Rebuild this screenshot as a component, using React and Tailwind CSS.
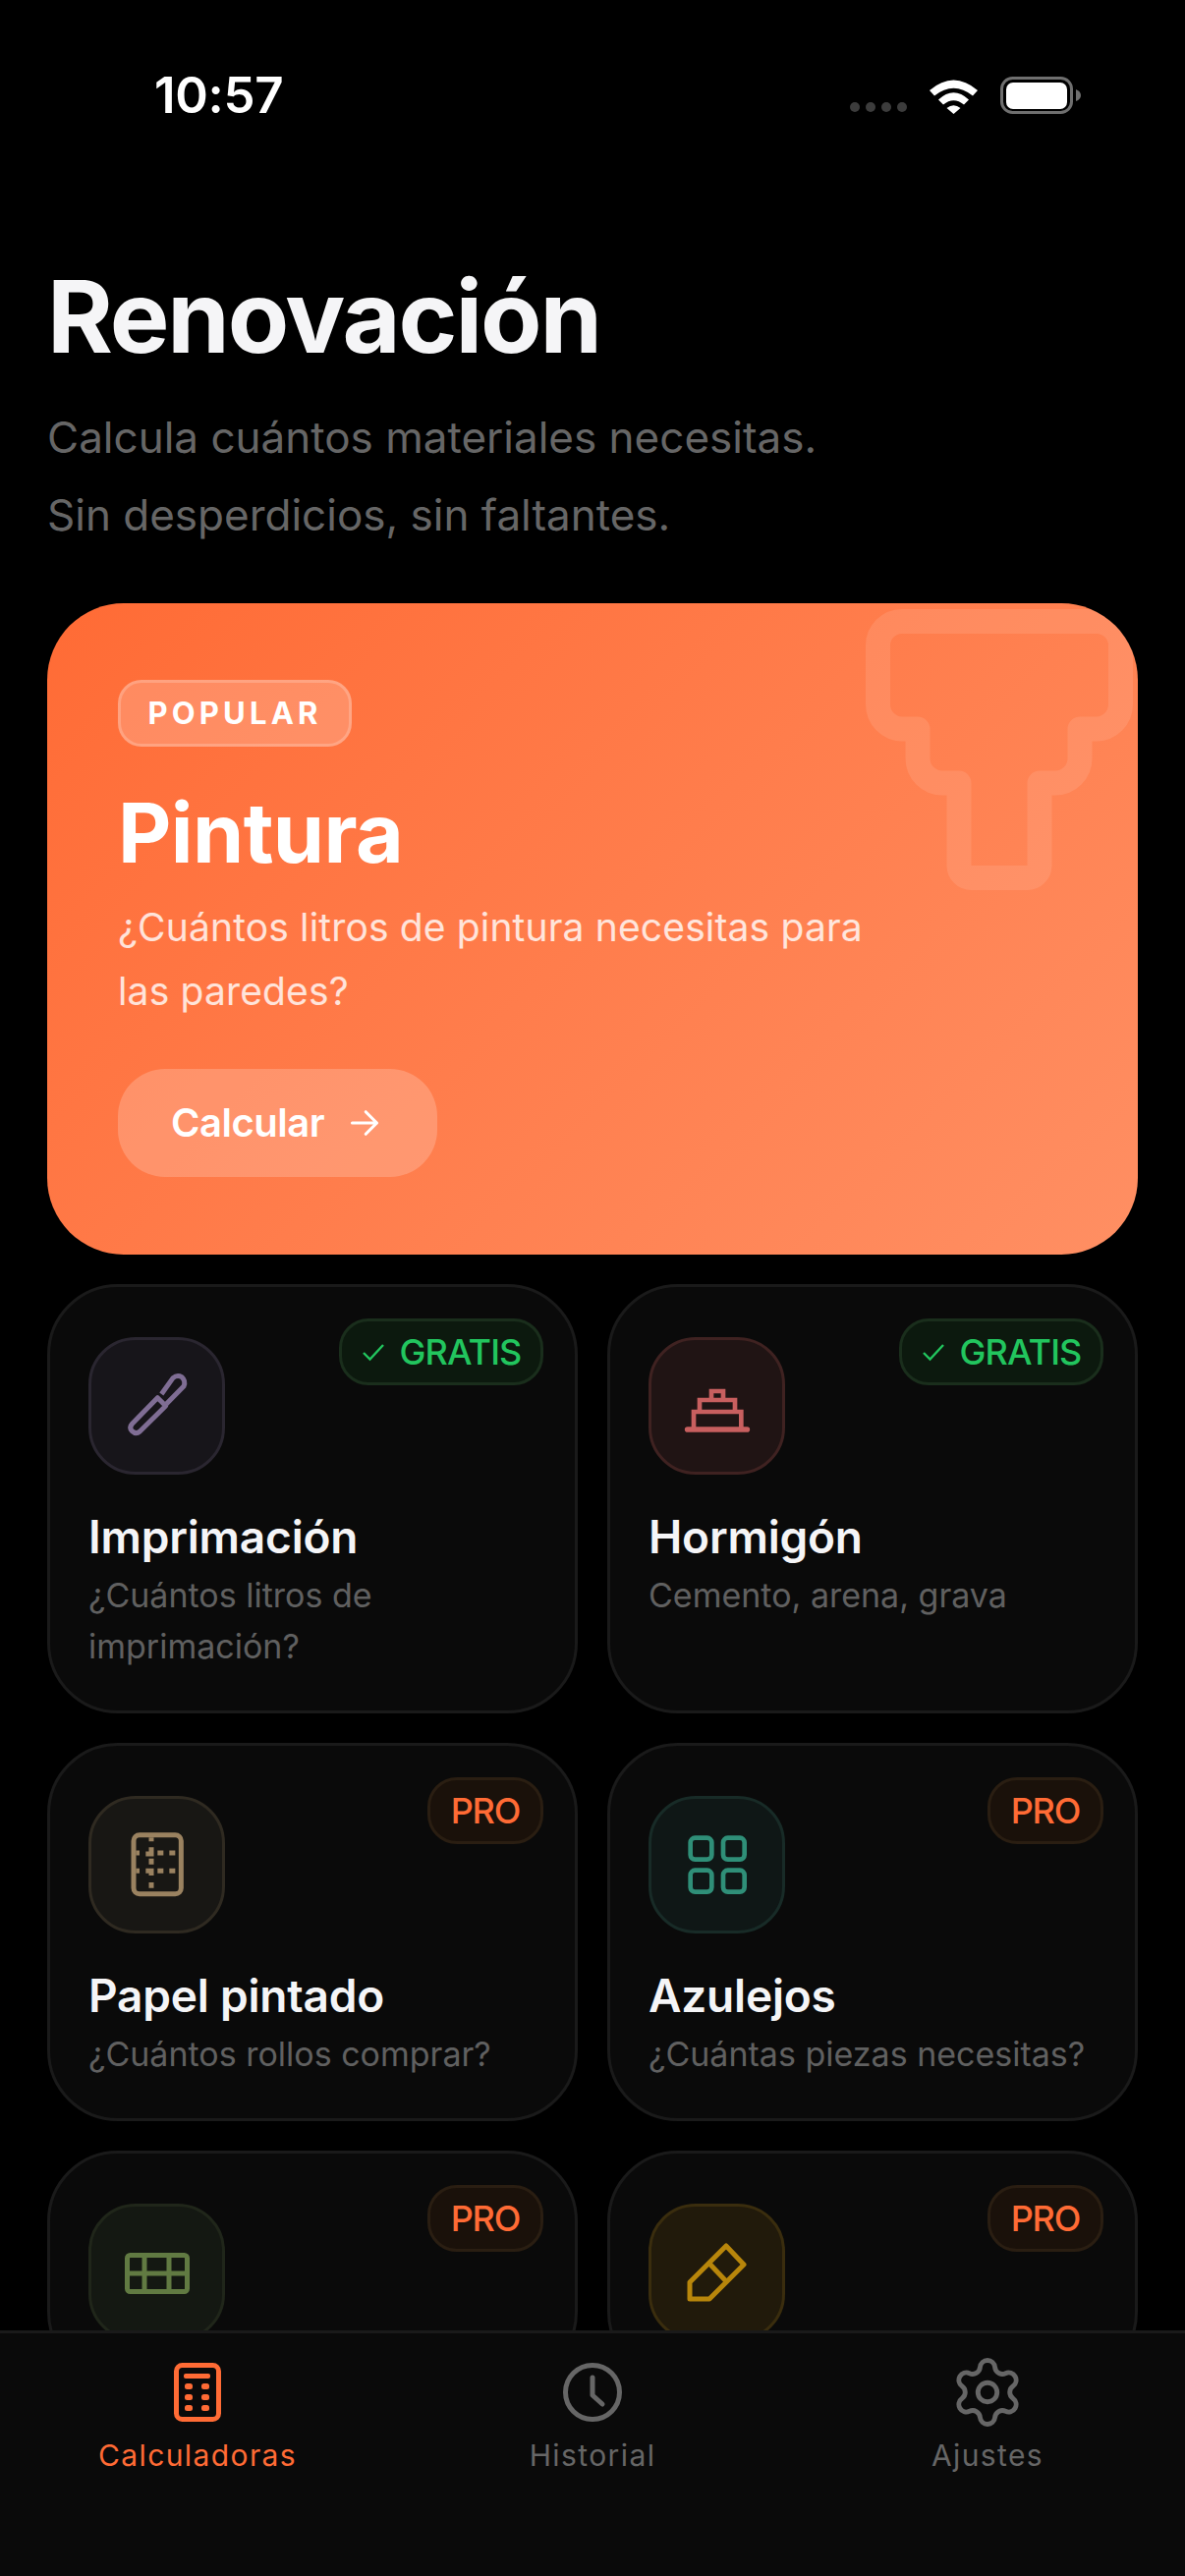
import { Settings } from 'lucide-react';

const font = { fontFamily: 'Inter, "Noto Sans", sans-serif' };

const Check = () => (
  <svg width="24" height="24" viewBox="0 0 24 24" fill="none" stroke="#22c55e" strokeWidth="2.4" className="shrink-0">
    <path d="M2 13 L8.5 19.5 L22 5" />
  </svg>
);

const BrushIcon = () => (
  <svg width="72" height="72" viewBox="189 220 216 216" fill="none" stroke="#7f6d94" strokeWidth="15" strokeLinejoin="round">
    <path d="M298 303 L221 382 Q210 394 220 405 Q232 416 244 406 L323 328 Z" />
    <path d="M310 292 L345 243 Q358 232 372 240 Q385 252 378 268 L325 322" />
  </svg>
);

const ConcreteIcon = () => (
  <svg width="72" height="72" viewBox="159 192 216 216" fill="none" stroke="#c85f5f" strokeWidth="14">
    <path d="M176 372 H358" strokeWidth="17" strokeLinecap="round" />
    <path d="M195 372 V318 H340 V372" />
    <path d="M213 318 V282 H321 V318" />
    <path d="M249 282 V255 H285 V282" />
  </svg>
);

const WallpaperIcon = () => (
  <svg width="72" height="72" viewBox="189 183 216 216" fill="none" stroke="#9a8260" strokeWidth="15">
    <rect x="225" y="200" width="145" height="180" rx="18" />
    <path d="M279 208 V220 M279 238 V258 H262 M279 272 V290 M262 310 H279 V324 M279 345 V362" />
    <path d="M298 255 H316 M334 255 H352 M298 310 H316 M334 310 H352 M232 255 H243 M232 310 H243" />
  </svg>
);

const TilesIcon = () => (
  <svg width="72" height="72" viewBox="159 182 216 216" fill="none" stroke="#2f8f78" strokeWidth="14">
    <rect x="185" y="208" width="65" height="66" rx="14" />
    <rect x="285" y="208" width="65" height="66" rx="14" />
    <rect x="185" y="307" width="65" height="66" rx="14" />
    <rect x="285" y="307" width="65" height="66" rx="14" />
  </svg>
);

const GridIcon = () => (
  <svg width="72" height="72" viewBox="0 0 72 72" fill="none" stroke="#617a42" strokeWidth="5">
    <rect x="5.5" y="18.5" width="61" height="37" rx="3" />
    <path d="M23 18 V56 M48 18 V56 M5 37 H67" />
  </svg>
);

const EraserIcon = () => (
  <svg width="72" height="72" viewBox="0 0 72 72" fill="none" stroke="#b8860b" strokeWidth="5" strokeLinejoin="round">
    <path d="M45 9 L63 28 L28 63 H8 V46 Z" />
    <path d="M28 27 L45 45" />
  </svg>
);

const CalcIcon = () => (
  <svg width="48" height="60" viewBox="0 0 48 60" fill="#ff6b35">
    <rect x="2.5" y="2.5" width="43" height="55" rx="6" fill="none" stroke="#ff6b35" strokeWidth="5" />
    <rect x="10" y="11" width="27" height="5" rx="2" />
    <rect x="11" y="21" width="8" height="6" rx="2.5" />
    <rect x="28" y="21" width="8" height="6" rx="2.5" />
    <rect x="11" y="32" width="8" height="6" rx="2.5" />
    <rect x="28" y="32" width="8" height="6" rx="2.5" />
    <rect x="11" y="43" width="8" height="6" rx="2.5" />
    <rect x="28" y="43" width="8" height="6" rx="2.5" />
  </svg>
);

const ClockIcon = () => (
  <svg width="60" height="60" viewBox="0 0 60 60" fill="none" stroke="#666666" strokeWidth="5" strokeLinecap="round" strokeLinejoin="round">
    <circle cx="30" cy="30" r="27.5" />
    <path d="M30 15 V33 L40 42" />
  </svg>
);

// last two rows are cut by the tab bar, only the icon shows
const cards = [
  { title: 'Imprimación', desc: ['¿Cuántos litros de', 'imprimación?'], icon: <BrushIcon />, box: 'bg-[#17151a] border-[#2a2630]', free: true },
  { title: 'Hormigón', desc: ['Cemento, arena, grava'], icon: <ConcreteIcon />, box: 'bg-[#201414] border-[#3f2221]', free: true },
  { title: 'Papel pintado', desc: ['¿Cuántos rollos comprar?'], icon: <WallpaperIcon />, box: 'bg-[#181714] border-[#2f2a21]' },
  { title: 'Azulejos', desc: ['¿Cuántas piezas necesitas?'], icon: <TilesIcon />, box: 'bg-[#0f1716] border-[#182b27]' },
  { icon: <GridIcon />, box: 'bg-[#141812] border-[#20261a]', id: 'grid' },
  { icon: <EraserIcon />, box: 'bg-[#211a0b] border-[#3a2d0e]', id: 'eraser' },
];

const Card = ({ card }) => (
  <div className="relative rounded-[72px] border-[3px] border-[#1a1a1a] bg-[#0a0a0a] px-[39px] pt-[51px] pb-[39px]">
    {card.free ? (
      <div className="absolute top-[32px] right-[32px] flex h-[68px] w-[208px] items-center justify-center gap-[15px] rounded-[30px] border-[3px] border-[#1a2e1c] bg-[#0c190e] text-[36px] font-medium tracking-[-0.9px] text-[#22c55e]">
        <Check />
        GRATIS
      </div>
    ) : (
      <div className="absolute top-[32px] right-[32px] flex h-[68px] w-[118px] items-center justify-center rounded-[30px] border-[3px] border-[#2a1e12] bg-[#1a110a] text-[36px] font-medium tracking-[-1.1px] text-[#ff6b35]">
        PRO
      </div>
    )}
    <div className={`flex h-[140px] w-[139px] items-center justify-center rounded-[48px] border-[3px] ${card.box}`}>
      {card.icon}
    </div>
    {card.title && (
      <>
        <h3 className="mt-[33px] text-[46px] leading-[60px] font-semibold tracking-[-0.2px] text-[#f5f5f7]">{card.title}</h3>
        <div className="mt-[4px] text-[34px] leading-[52px] text-[#606060]">
          {card.desc.map(line => (
            <div key={line}>{line}</div>
          ))}
        </div>
      </>
    )}
  </div>
);

const NavItem = ({ icon, label, active }) => (
  <div className="flex flex-col items-center">
    <div className="flex h-[66px] items-center justify-center">{icon}</div>
    <span className={`mt-[11px] text-[30px] leading-[40px] tracking-[1.4px] ${active ? 'text-[#ff6b35]' : 'text-[#666666]'}`}>{label}</span>
  </div>
);

export default function App() {
  return (
    <div style={font} className="flex h-[2622px] w-[1206px] flex-col overflow-hidden bg-black">
      <div className="flex-1 overflow-hidden">
        {/* Status bar */}
        <div className="flex h-[257px] items-start justify-between pt-[68px] pr-[106px] pl-[157px]">
          <span className="text-[51px] leading-[58px] font-semibold tracking-[-0.3px] text-white">10:57</span>
          <div className="relative flex items-center pt-[10px]">
            <div className="mt-[24px] mr-[23px] flex gap-[6px]">
              {[0, 1, 2, 3].map(i => (
                <div key={i} className="h-[10px] w-[10px] rounded-full bg-[#3c3c3c]" />
              ))}
            </div>
            <svg width="49" height="37" viewBox="0 0 49 37" className="mr-[23px]" fill="white">
              <path d="M0 13 Q24.5 -8 49 13 L44 18.5 Q24.5 3 5 18.5 Z" />
              <path d="M9 22.5 Q24.5 8 40 22.5 L35 27.5 Q24.5 19 14 27.5 Z" />
              <path d="M17.5 31 Q24.5 25.5 31.5 31 L24.5 37 Z" />
            </svg>
            <svg width="82" height="38" viewBox="0 0 82 38" fill="none">
              <rect x="1.5" y="1.5" width="71" height="35" rx="11" stroke="#6f6f6f" strokeWidth="3" />
              <rect x="6" y="6" width="62" height="27" rx="7" fill="white" />
              <path d="M77 13 Q82 15 82 19 Q82 23 77 25 Z" fill="#6f6f6f" />
            </svg>
          </div>
        </div>

        {/* Header */}
        <div className="px-[48px]">
          <h1 className="text-[102px] leading-[130px] font-bold tracking-[-2.1px] text-[#f5f5f7]">Renovación</h1>
          <p className="mt-[19px] text-[44px] leading-[79px] text-[#666666]">
            Calcula cuántos materiales necesitas.
            <br />
            Sin desperdicios, sin faltantes.
          </p>
        </div>

        {/* Hero */}
        <div className="relative mx-[48px] mt-[50px] h-[663px] overflow-hidden rounded-[78px] bg-[linear-gradient(135deg,#ff6b35,#ff8f63)] pt-[78px] pl-[72px]">
          <svg width="300" height="300" viewBox="881 619 300 300" fill="none" stroke="white" strokeOpacity="0.1" strokeWidth="25" className="absolute top-[6px] right-[-23px]">
            <path
              d="M918 631.5 H1116 A24.5 24.5 0 0 1 1140.5 656 V716 A25 25 0 0 1 1116 741 H1099 V771 A25 25 0 0 1 1074 796 H1058 V880 A12.5 12.5 0 0 1 1045 892.5 H989 A12.5 12.5 0 0 1 976 880 V796 H959 A25 25 0 0 1 934 771 V741 H918 A25 25 0 0 1 893.5 716 V656 A24.5 24.5 0 0 1 918 631.5 Z"
              strokeLinejoin="round"
            />
          </svg>
          <div className="flex h-[68px] w-[238px] items-center justify-center rounded-[24px] border-[3px] border-white/20 bg-white/20 text-[31px] font-bold tracking-[4.2px] text-white">
            POPULAR
          </div>
          <h2 className="mt-[33px] text-[84px] leading-[110px] font-bold tracking-[-0.6px] text-white">Pintura</h2>
          <p className="mt-[8px] text-[39px] leading-[65px] tracking-[0.15px] text-white/80">
            ¿Cuántos litros de pintura necesitas para
            <br />
            las paredes?
          </p>
          <div className="mt-[47px] flex h-[110px] w-[325px] items-center gap-[26px] rounded-[48px] bg-white/20 pl-[54px] text-[40px] font-semibold tracking-[-0.5px] text-white">
            Calcular
            <svg width="30" height="30" viewBox="0 0 24 24" fill="none" stroke="white" strokeWidth="2.5" strokeLinecap="round" strokeLinejoin="round">
              <path d="M2 12 H22 M13 3 L22 12 L13 21" />
            </svg>
          </div>
        </div>

        {/* Cards */}
        <div className="mx-[48px] mt-[30px] grid grid-cols-2 gap-[30px]">
          {cards.map(card => (
            <Card key={card.title || card.id} card={card} />
          ))}
        </div>
      </div>

      {/* Bottom nav */}
      <div className="grid h-[250px] shrink-0 grid-cols-3 border-t-[3px] border-[#1a1a1a] bg-[#0a0a0a] pt-[27px]">
        <NavItem icon={<CalcIcon />} label="Calculadoras" active />
        <NavItem icon={<ClockIcon />} label="Historial" />
        <NavItem icon={<Settings size={78} strokeWidth={1.5} color="#666666" />} label="Ajustes" />
      </div>
    </div>
  );
}
